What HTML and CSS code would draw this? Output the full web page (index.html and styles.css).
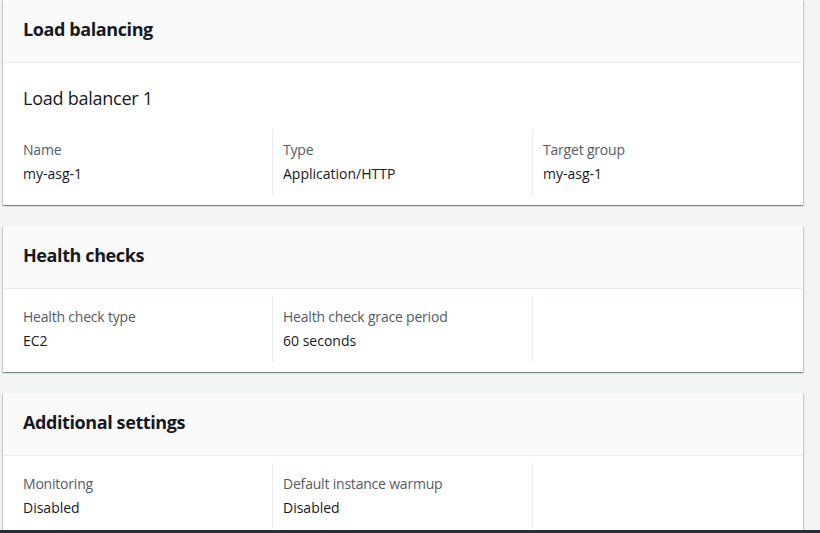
FILE: index.html
```html
<!DOCTYPE html>
<html>
<head>
<meta charset="utf-8">
<link rel="stylesheet" href="styles.css">
</head>
<body>
<div class="page">
  <section class="card">
    <div class="card-header"><h2>Load balancing</h2></div>
    <div class="card-body">
      <h3 class="sub">Load balancer 1</h3>
      <div class="cols">
        <div class="col"><div class="label">Name</div><div class="value">my-asg-1</div></div>
        <div class="col"><div class="label">Type</div><div class="value">Application/HTTP</div></div>
        <div class="col"><div class="label">Target group</div><div class="value">my-asg-1</div></div>
      </div>
    </div>
  </section>
  <section class="card">
    <div class="card-header"><h2>Health checks</h2></div>
    <div class="card-body">
      <div class="cols">
        <div class="col"><div class="label">Health check type</div><div class="value">EC2</div></div>
        <div class="col"><div class="label">Health check grace period</div><div class="value">60 seconds</div></div>
        <div class="col"></div>
      </div>
    </div>
  </section>
  <section class="card">
    <div class="card-header"><h2>Additional settings</h2></div>
    <div class="card-body">
      <div class="cols">
        <div class="col"><div class="label">Monitoring</div><div class="value">Disabled</div></div>
        <div class="col"><div class="label">Default instance warmup</div><div class="value">Disabled</div></div>
        <div class="col"></div>
      </div>
    </div>
  </section>
</div>
<div class="footer-bar"></div>
</body>
</html>
```
FILE: styles.css
```css
html, body {
  margin: 0;
  padding: 0;
  background: #f2f3f3;
  font-family: "Open Sans", "Noto Sans", sans-serif;
  color: #16191f;
  overflow: hidden;
  height: 533px;
}
.page {
  display: flex;
  flex-direction: column;
  gap: 21px;
  width: 800px;
  padding-left: 3px;
}
.card {
  background: #fff;
  box-shadow: 0 1px 1px 0 rgba(0, 28, 36, 0.3), 1px 1px 1px 0 rgba(0, 28, 36, 0.15), -1px 1px 1px 0 rgba(0, 28, 36, 0.15);
}
.card-header {
  background: #fafafa;
  border-bottom: 1px solid #eaeded;
  padding: 18px 20px 22px 20px;
}
.card-header h2 {
  margin: 0;
  font-size: 18px;
  line-height: 22px;
  font-weight: 700;
  letter-spacing: -0.4px;
}
.card-body {
  padding: 7px 20px 10px 20px;
}
.sub {
  margin: 13px 0 16px 0;
  font-size: 18px;
  line-height: 30px;
  font-weight: 400;
  letter-spacing: -0.25px;
}
.cols {
  display: grid;
  grid-template-columns: 249px 260px 1fr;
}
.col {
  padding: 10px 0;
  min-height: 46px;
}
.col + .col {
  border-left: 1px solid #eaeded;
  padding-left: 10px;
}
.label {
  font-size: 14px;
  line-height: 22px;
  color: #545b64;
  letter-spacing: -0.2px;
}
.value {
  font-size: 14px;
  line-height: 22px;
  margin-top: 2px;
  color: #16191f;
}
.footer-bar {
  position: fixed;
  left: 0;
  right: 0;
  bottom: 0;
  height: 3px;
  background: #232f3e;
}
```
